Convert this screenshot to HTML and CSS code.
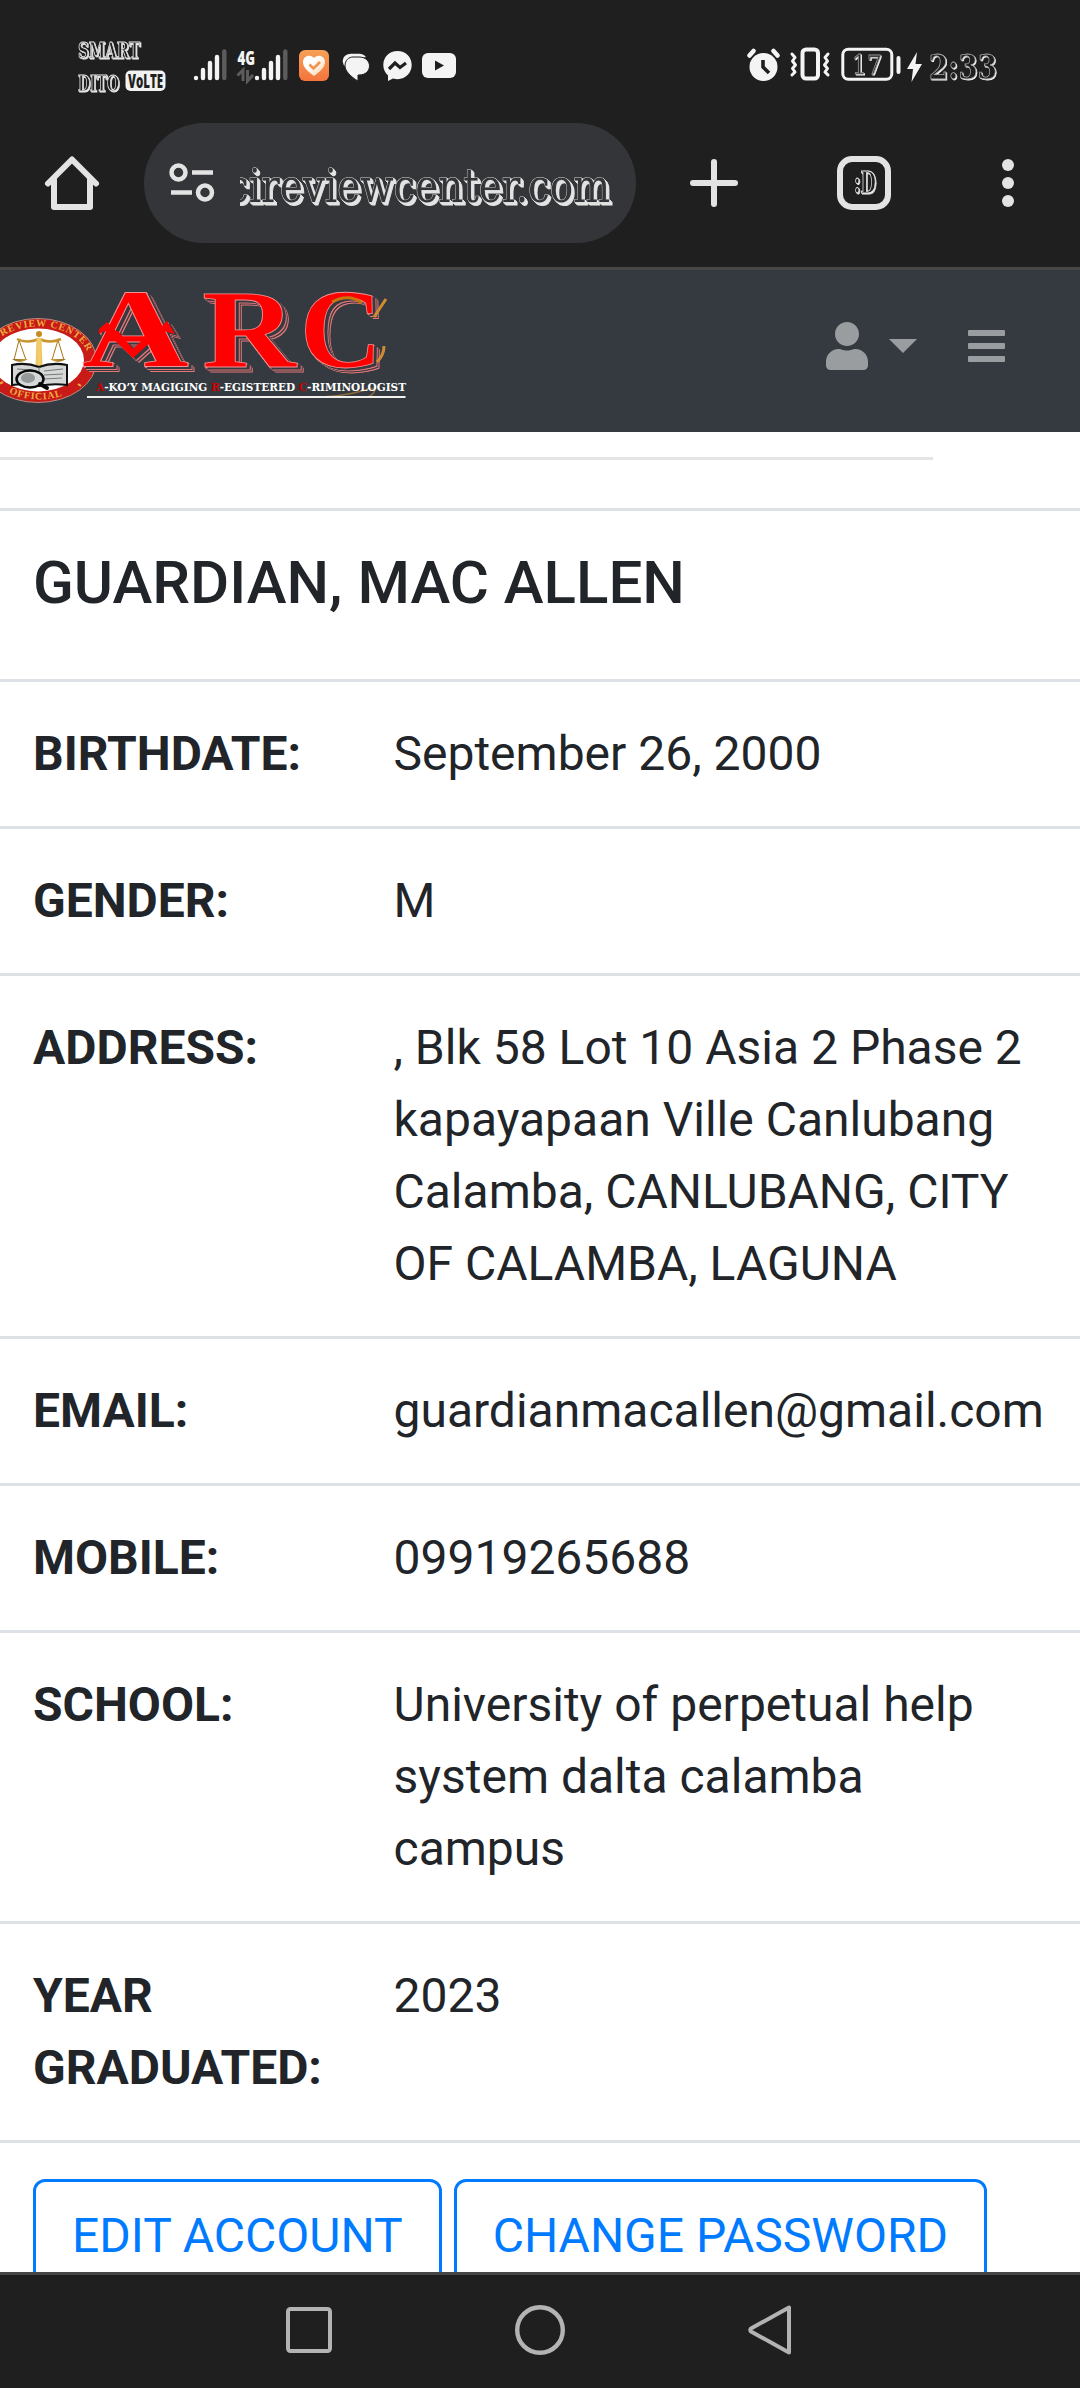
FILE: index.html
```html
<!DOCTYPE html>
<html lang="en">
<head>
<meta charset="utf-8">
<title>Account</title>
<link rel="stylesheet" href="styles.css">
</head>
<body>
<div class="phone">
  <header class="chrome">
    <div class="status">
      <svg class="carrier" width="92" height="56" viewBox="76 38 92 56">
        <g class="fancy fancy-small">
          <text x="78" y="59" font-size="23" textLength="62" lengthAdjust="spacingAndGlyphs">SMART</text>
          <text x="78" y="92" font-size="23" textLength="41" lengthAdjust="spacingAndGlyphs">DITO</text>
        </g>
        <rect x="125.500" y="71.500" width="40" height="20.500" rx="5" fill="#f2f2f2"/>
        <text class="volte" x="128" y="89" textLength="35" lengthAdjust="spacingAndGlyphs">VoLTE</text>
      </svg>
      <svg class="signal" width="34" height="34" viewBox="193 47 34 34" stroke="#f4f4f4" stroke-width="4.400" stroke-linecap="round">
        <path d="M196 79v.1M203 71v8M210 64v15M217 58v21"/><path d="M224.300 52.500V79" stroke="#5c5c5c"/>
      </svg>
      <svg class="signal-4g" width="52" height="34" viewBox="237 47 52 34">
        <text class="gen" x="237.500" y="65.500" textLength="17.500" lengthAdjust="spacingAndGlyphs">4G</text>
        <path d="M237.500 76.500l5.500-5.500v11M247.500 71v11l5.500-6" stroke="#5c5c5c" stroke-width="3" fill="none"/>
        <g stroke="#f4f4f4" stroke-width="4.400" stroke-linecap="round"><path d="M257 79v.1M264 71v8M271 64v15M278 58v21"/><path d="M285.300 52.500V79" stroke="#5c5c5c"/></g>
      </svg>
      <svg class="health" width="30" height="31" viewBox="0 0 30 31">
        <defs><linearGradient id="orange" x2="0" y2="1"><stop stop-color="#f7a157"/><stop offset="1" stop-color="#f4743c"/></linearGradient><linearGradient id="cream" x2="1" y2="1"><stop offset=".35" stop-color="#fff"/><stop offset="1" stop-color="#fdd3a8"/></linearGradient></defs>
        <rect width="30" height="31" rx="6" fill="url(#orange)"/>
        <path d="M15 26C10 22 4 18 4 12c0-6 7-8.500 11-4 4-4.500 11-2 11 4 0 6-6 10-11 14z" fill="url(#cream)"/>
        <path d="M10.500 14.500l4 4 6.500-6.500" fill="none" stroke="#f0934f" stroke-width="2.500"/>
      </svg>
      <svg class="chat" width="28" height="28" viewBox="0 0 28 28">
        <path d="M5.500 15Q0 12 .8 7 2 1 9 .8h8q5 0 7 3.500L10 4.500Q4 6 5.500 15z" fill="#f4f4f4"/>
        <path d="M11 4h6c14 0 14 18 0 18h-1v6C9 24 3 18 3 13c0-6 4-9 8-9z" fill="#f4f4f4" stroke="#1f1f1f" stroke-width="1"/>
      </svg>
      <svg class="messenger" width="29" height="30" viewBox="0 0 29 30">
        <path d="M14.500 0C6.300 0 .3 6 .3 14c0 4 1.700 8 4.700 10.500V30l5-2.500c11 3 18.700-5 18.700-13.500C28.700 6 22.700 0 14.500 0z" fill="#f4f4f4"/>
        <path d="M6 18l6-6 5 4.500 6-4.500" fill="none" stroke="#1f1f1f" stroke-width="3.200"/>
      </svg>
      <svg class="youtube" width="34" height="25" viewBox="0 0 34 25"><rect width="34" height="25" rx="6" fill="#f4f4f4"/><path d="M13 7.500l9 5-9 5z" fill="#1f1f1f"/></svg>
      <svg class="alarm" width="33" height="34" viewBox="0 0 33 34">
        <circle cx="16.500" cy="20" r="14" fill="#f4f4f4"/>
        <path d="M2.500 8.500l4-4.500M30.500 8.500l-4-4.500" stroke="#f4f4f4" stroke-width="4.500" stroke-linecap="round"/>
        <path d="M16 13v7l6 6" fill="none" stroke="#1f1f1f" stroke-width="3.600"/>
      </svg>
      <svg class="vibrate" width="40" height="34" viewBox="0 0 40 34" fill="none" stroke="#f4f4f4">
        <rect x="12.500" y="2.500" width="15.500" height="29" rx="3.500" stroke-width="4"/>
        <path d="M2 7l3 3.500L2.500 14l3 4-3 3.500L5 25l-3 3M38 7l-3 3.500 2.500 3.500-3 4 3 3.500L35 25l3 3" stroke-width="3" stroke-linecap="round" stroke-linejoin="round"/>
      </svg>
      <svg class="battery" width="61" height="34" viewBox="843 48 61 34">
        <rect x="844.800" y="50.300" width="49" height="30" rx="5.500" fill="none" stroke="#f4f4f4" stroke-width="3"/>
        <path d="M900.500 59v14" stroke="#f4f4f4" stroke-width="4" stroke-linecap="round"/>
        <g class="fancy fancy-battery"><text x="854" y="75" font-size="26" textLength="30">17</text></g>
      </svg>
      <svg class="bolt" width="15" height="30" viewBox="0 0 15 30"><path d="M10 0L0 17h6L4.500 30 15 12H8.500z" fill="#f4f4f4"/></svg>
      <svg class="clock" width="74" height="36" viewBox="930 48 74 36"><g class="fancy fancy-clock"><text x="931" y="80" font-size="34" textLength="68" lengthAdjust="spacingAndGlyphs">2:33</text></g></svg>
    </div>
    <div class="toolbar">
      <svg class="home" width="54" height="54" viewBox="0 0 54 54" fill="none" stroke="#e3e3e3" stroke-width="6" stroke-linejoin="round" stroke-linecap="round"><path d="M3 27.500L27 3.500l24 24"/><path d="M9 24v27h36V24" /></svg>
      <div class="address-bar">
        <svg class="tune" width="46" height="40" viewBox="0 0 46 40" fill="none" stroke="#e3e3e3" stroke-width="4.500"><circle cx="9.500" cy="9.500" r="7"/><circle cx="36" cy="29.500" r="7"/><path d="M23 9.500h21M2 29.500h21"/></svg>
        <svg class="url" width="375" height="56" viewBox="240 155 375 56"><g class="fancy fancy-url"><text x="227" y="202" font-size="47" textLength="383" lengthAdjust="spacingAndGlyphs">cireviewcenter.com</text></g></svg>
      </div>
      <svg class="plus" width="48" height="48" viewBox="0 0 48 48"><path d="M24 3v42M3 24h42" stroke="#e3e3e3" stroke-width="6" stroke-linecap="round"/></svg>
      <svg class="tabs" width="54" height="54" viewBox="0 0 54 54"><rect x="3" y="3" width="48" height="48" rx="12" fill="none" stroke="#e3e3e3" stroke-width="6"/><g class="fancy fancy-tab"><text x="17" y="37" font-size="30" textLength="22" lengthAdjust="spacingAndGlyphs">:D</text></g></svg>
      <svg class="more" width="12" height="48" viewBox="0 0 12 48" fill="#e3e3e3"><circle cx="6" cy="6" r="6"/><circle cx="6" cy="24" r="6"/><circle cx="6" cy="42" r="6"/></svg>
    </div>
  </header>

  <main class="page">
    <nav class="navbar">
      <svg class="logo" width="420" height="162" viewBox="0 270 420 162">
        <defs>
          <path id="seal-top" d="M-13 361A51 34.500 0 0 1 89 361A51 34.500 0 0 1 80 380"/>
          <path id="seal-bottom" d="M-15 361A54 38.500 0 0 0 93 361"/>
          <linearGradient id="gold"><stop stop-color="#8d6414"/><stop offset=".5" stop-color="#f5cf6c"/><stop offset="1" stop-color="#9a6a16"/></linearGradient>
        </defs>
        <ellipse cx="38" cy="360.500" rx="58.500" ry="42" fill="#c81a16" stroke="#b98e85"/>
        <ellipse cx="38" cy="360" rx="46" ry="31.500" fill="#fff"/>
        <text class="seal"><textPath href="#seal-top" startOffset="30">REVIEW CENTER</textPath></text>
        <text class="seal"><textPath href="#seal-bottom" startOffset="42">OFFICIAL</textPath></text>
        <path d="M-1 384l4-2M78 384l3 2" stroke="#ecac42" stroke-width="2"/>
        <g fill="none" stroke="#a87518" stroke-width="1"><path d="M19 340l-5 20M19 340l7 20M58 340l-6 20M58 340l6 20"/><path d="M17 339q10 5 22 0 11 5 22 0" stroke="#c79430" stroke-width="2.500"/></g>
        <path d="M12 359h16q-8 6-16 0zM50 359h16q-8 6-16 0zM36.500 338h5l1 29h-7z" fill="url(#gold)"/><circle cx="39" cy="334" r="3" fill="#c58a20"/>
        <path d="M12 365q14-3 27 2 13-5 28-2v20q-14-2-28 1-13-3-27-1z" fill="#d5d7d7" stroke="#111" stroke-width="2"/>
        <path d="M39 367v17M44 371l19-2M44 375l19-1M44 379l18-1M17 369l16 1" stroke="#777" stroke-width="1"/>
        <ellipse cx="30" cy="379" rx="13.500" ry="8.500" fill="#d6d9d9" stroke="#080808" stroke-width="2.500"/><ellipse cx="28" cy="378" rx="7" ry="5" fill="#959999"/><path d="M40 384l7 4" stroke="#080808" stroke-width="4" stroke-linecap="round"/>
        <g class="arc">
          <text x="82" y="367" textLength="107" lengthAdjust="spacingAndGlyphs">A</text>
          <path d="M99 329l8-7 9 9 2 0 15 18 18-18 8-2 8-8 8 13-12-3-30 27-28-27-6 3z"/>
          <text x="202" y="367" textLength="94" lengthAdjust="spacingAndGlyphs">R</text>
          <text x="300" y="367" textLength="82" lengthAdjust="spacingAndGlyphs">C</text>
        </g>
        <path d="M332 302q17-9 30 1" fill="none" stroke="#c8740f" stroke-width="3"/><path d="M374 317l12-18M377 362q7-7 7-16" fill="none" stroke="#d08b32" stroke-width="3"/>
        <path d="M322 397q32-2 48-9l5 2q-3 8-13 7" fill="none" stroke="#8d6b3b" stroke-width="1.500"/>
        <text class="tagline" x="96" y="390.500" textLength="310" lengthAdjust="spacingAndGlyphs"><tspan class="initial">A</tspan>-KO’Y MAGIGING <tspan class="initial">R</tspan>-EGISTERED <tspan class="initial">C</tspan>-RIMINOLOGIST</text>
        <path d="M87 397h318.500" stroke="#f3f1ed" stroke-width="2"/>
      </svg>
      <div class="nav-actions">
        <svg width="42" height="48" viewBox="0 0 448 512" fill="#9a9da0"><path d="M224 256c70.700 0 128-57.300 128-128S294.700 0 224 0 96 57.300 96 128s57.300 128 128 128zm89.600 32h-16.700c-22.200 10.200-46.900 16-72.900 16s-50.600-5.800-72.900-16h-16.700C60.200 288 0 348.200 0 422.400V464c0 26.500 21.500 48 48 48h352c26.500 0 48-21.500 48-48v-41.600c0-74.200-60.200-134.400-134.400-134.400z"/></svg>
        <svg class="caret" width="28" height="14" viewBox="0 0 28 14"><path d="M0 0h28L14 14z" fill="#9a9da0"/></svg>
        <svg class="bars" width="37" height="32" viewBox="0 0 37 32" fill="#9a9da0"><rect width="37" height="6" rx="1"/><rect y="13" width="37" height="6" rx="1"/><rect y="26" width="37" height="6" rx="1"/></svg>
      </div>
    </nav>
    <hr class="divider">
    <section class="profile">
      <div class="row name-row"><h1 class="name">GUARDIAN, MAC ALLEN</h1></div>
      <div class="row"><div class="label">BIRTHDATE:</div><div class="value">September 26, 2000</div></div>
      <div class="row"><div class="label">GENDER:</div><div class="value">M</div></div>
      <div class="row"><div class="label">ADDRESS:</div><div class="value">, Blk 58 Lot 10 Asia 2 Phase 2<br>kapayapaan Ville Canlubang<br>Calamba, CANLUBANG, CITY<br>OF CALAMBA, LAGUNA</div></div>
      <div class="row"><div class="label">EMAIL:</div><div class="value">guardianmacallen@gmail.com</div></div>
      <div class="row"><div class="label">MOBILE:</div><div class="value">09919265688</div></div>
      <div class="row"><div class="label">SCHOOL:</div><div class="value">University of perpetual help<br>system dalta calamba<br>campus</div></div>
      <div class="row"><div class="label">YEAR<br>GRADUATED:</div><div class="value">2023</div></div>
      <div class="row actions"><button class="btn">EDIT ACCOUNT</button><button class="btn">CHANGE PASSWORD</button></div>
    </section>
  </main>

  <footer class="system-nav">
    <svg width="46" height="46" viewBox="0 0 46 46"><rect x="2" y="2" width="42" height="42" rx="2.500" fill="none" stroke="#b3b3b3" stroke-width="4"/></svg>
    <svg width="50" height="50" viewBox="0 0 50 50"><circle cx="25" cy="25" r="22.800" fill="none" stroke="#b3b3b3" stroke-width="4.400"/></svg>
    <svg width="43" height="50" viewBox="0 0 43 50"><path d="M41 2.500v45L3 26.500q-1.500-1.500 0-3z" fill="none" stroke="#b3b3b3" stroke-width="4" stroke-linejoin="round"/></svg>
  </footer>
</div>
</body>
</html>
```
FILE: styles.css
```css
* { box-sizing: border-box; }
body { margin: 0; background: #fff; font-family: Roboto, "Noto Sans", sans-serif; }
svg { display: block; flex: none; overflow: visible; }
.phone { display: flex; flex-direction: column; width: 1080px; height: 2388px; overflow: hidden; }

/* Browser chrome */
.chrome { flex: none; height: 270px; background: #1f1f1f; border-bottom: 3px solid #474745; }
.status { display: flex; align-items: flex-start; height: 123px; padding: 37px 0 0 76px; }
.signal { margin: 9px 0 0 25px; }
.signal-4g { margin: 9px 0 0 10px; }
.health { margin: 13px 0 0 10px; }
.chat { margin: 16px 0 0 13px; }
.messenger { margin: 14px 0 0 13px; }
.youtube { margin: 16px 0 0 10px; }
.alarm { margin: 10px 0 0 291px; }
.vibrate { margin: 10px 0 0 10px; }
.battery { margin: 10px 0 0 11px; }
.bolt { margin: 15px 0 0 5px; }
.clock { margin: 10px 0 0 6px; }
.volte { font: 900 19px "Open Sans", sans-serif; fill: #1f1f1f; }
.gen { font: 800 20px "Open Sans", sans-serif; fill: #f4f4f4; }
.fancy { font-family: "DejaVu Serif Condensed", "DejaVu Serif", serif; font-weight: 700; fill: #1f1f1f; stroke: #e3e3e3; }
.fancy-small { stroke-width: 1; filter: drop-shadow(1px 1px 0 #e8e8e8); }
.fancy-battery { font-weight: 400; stroke: #999; stroke-width: .8; filter: drop-shadow(1px 1px 0 #f4f4f4); }
.fancy-clock { stroke: #aaa; stroke-width: .8; filter: drop-shadow(1.500px 1.500px 0 #f4f4f4); }
.fancy-url { font-weight: 400; fill: #343539; stroke: #d2d2d2; stroke-width: 1; paint-order: stroke; filter: drop-shadow(1px 1px 0 #e3e3e3) drop-shadow(1px 1px 0 #e3e3e3) drop-shadow(1px 1px 0 #e3e3e3); }
.fancy-tab { stroke-width: 1; filter: drop-shadow(1px 1px 0 #e3e3e3); }
.toolbar { display: flex; align-items: center; height: 120px; padding-left: 45px; }
.address-bar { display: flex; align-items: center; width: 492px; height: 120px; margin-left: 45px; padding-left: 25px; border-radius: 60px; background: #343539; }
.url { margin-left: 25px; overflow: hidden; }
.plus { margin-left: 54px; }
.tabs { margin-left: 99px; }
.more { margin-left: 111px; }

/* Page */
.page { flex: none; height: 2002px; overflow: hidden; background: #fff; }
.navbar { display: flex; justify-content: space-between; height: 162px; background: #343a40; }
.nav-actions { display: flex; align-items: center; height: 152px; padding-right: 75px; }
.caret { margin-left: 21px; }
.bars { margin-left: 51px; }
.seal { font: 700 10px "Liberation Serif", serif; fill: #ecac42; letter-spacing: .8px; }
.arc { font: 700 112px "Liberation Serif", serif; fill: #f00; stroke: #ef9292; stroke-width: .8; filter: drop-shadow(3px 2px 0 #343a40) drop-shadow(1px 1px 0 #e47777) drop-shadow(1px 1px 0 #343a40) drop-shadow(1px 1px 0 #e47777); }
.arc path { stroke: none; }
.tagline { font: 900 11px "DejaVu Serif", serif; fill: #fff; }
.initial { fill: #c00; }
.divider { width: 933px; height: 3px; margin: 25px 0 48px; border: 0; background: #e5e5e5; }
.row { display: grid; grid-template-columns: 357.500px 1fr; padding: 36px 0; border-top: 3px solid #dee2e6; color: #212529; font-size: 48px; line-height: 72px; }
.label { padding-left: 33px; font-weight: 700; }
.value { padding-left: 36px; white-space: nowrap; }
.name-row { display: block; padding-left: 33px; }
.name { margin: 0 0 24px; font-size: 60px; font-weight: 500; line-height: 72px; }
.actions { display: flex; gap: 12px; padding-left: 33px; }
.btn { flex: none; height: 114px; padding: 18px 36px; border: 3px solid #007bff; border-radius: 12px; background: #fff; color: #007bff; font: 400 48px/72px Roboto, "Noto Sans", sans-serif; }

/* Android navigation */
.system-nav { display: flex; align-items: center; flex: none; height: 116px; padding: 0 0 3px 286px; background: #1f1f1f; border-top: 3px solid #474747; }
.system-nav svg + svg { margin-left: 183px; }
```
